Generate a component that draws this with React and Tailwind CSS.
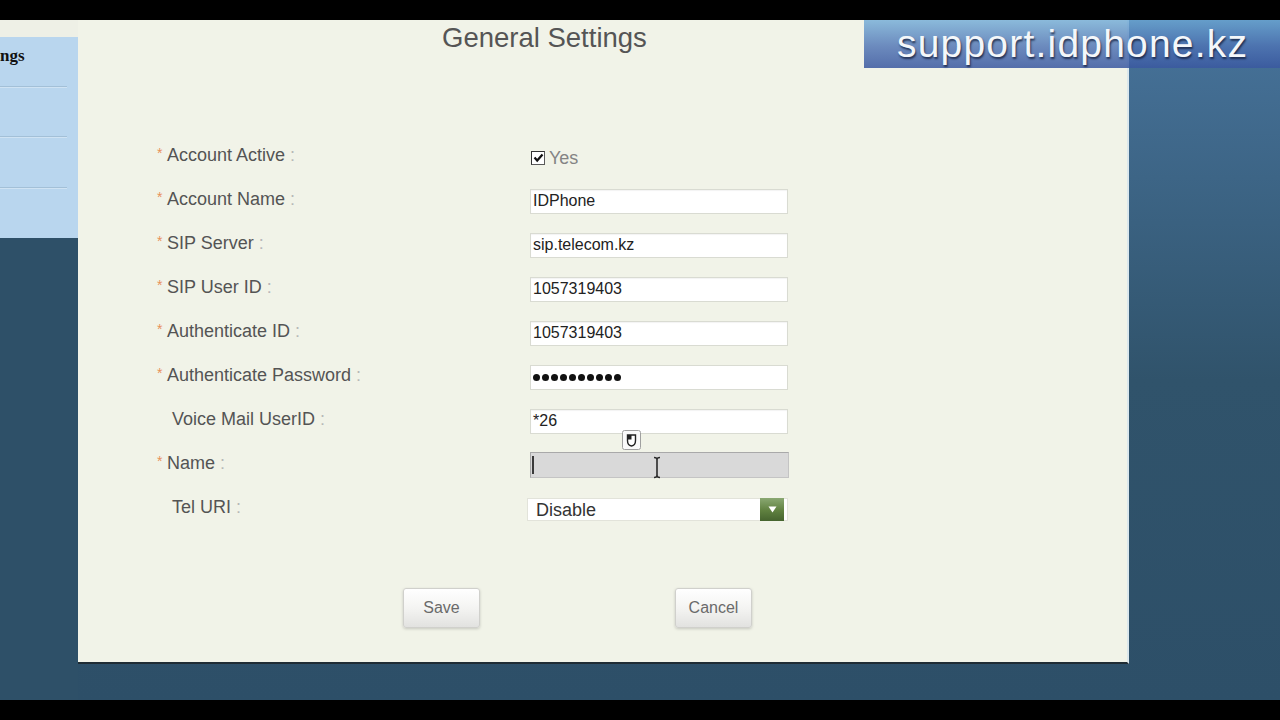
import React from 'react';

const rows = [
  { label: 'Account Active', req: true, kind: 'check' },
  { label: 'Account Name', req: true, kind: 'text', value: 'IDPhone' },
  { label: 'SIP Server', req: true, kind: 'text', value: 'sip.telecom.kz' },
  { label: 'SIP User ID', req: true, kind: 'text', value: '1057319403' },
  { label: 'Authenticate ID', req: true, kind: 'text', value: '1057319403' },
  { label: 'Authenticate Password', req: true, kind: 'password' },
  { label: 'Voice Mail UserID', req: false, kind: 'text', value: '*26' },
  { label: 'Name', req: true, kind: 'name' },
  { label: 'Tel URI', req: false, kind: 'select' },
];

function Label({ label, req }) {
  return (
    <div className="w-[375px] flex items-center text-[18px] leading-[22px] text-[#545454]">
      {req ? (
        <span className="w-[12px] pl-[2px] text-[14px] text-[#e8915a] relative top-[-2px]">*</span>
      ) : (
        <span className="w-[17px]" />
      )}
      <span>{label}</span>
      <span className="text-[#b8b8b8] ml-[5px]">:</span>
    </div>
  );
}

function Field({ row }) {
  if (row.kind === 'check') {
    return (
      <div className="flex items-center mt-[6px] ml-[1px]">
        <div className="w-[14px] h-[14px] bg-white border border-[#5a5a5a] border-t-[#333] border-l-[#333] flex items-center justify-center">
          <svg width="11" height="10" viewBox="0 0 11 10">
            <path d="M1.5 4.5 L4.2 7.5 L9.5 1.5" stroke="#111" strokeWidth="2.2" fill="none" />
          </svg>
        </div>
        <span className="ml-[4px] text-[18px] leading-[22px] text-[#848484]">Yes</span>
      </div>
    );
  }
  if (row.kind === 'text') {
    return (
      <div className="mt-[4px] w-[258px] h-[25px] bg-white border border-[#d9dbd2] shadow-[inset_0_1px_1px_rgba(0,0,0,0.05)] flex items-center pl-[2px] text-[16px] text-[#222]">
        {row.value}
      </div>
    );
  }
  if (row.kind === 'password') {
    return (
      <div className="mt-[4px] w-[258px] h-[25px] bg-white border border-[#d9dbd2] flex items-center pl-[2px] gap-[2px]">
        {Array.from({ length: 10 }).map((_, i) => (
          <div key={i} className="w-[7px] h-[7px] rounded-full bg-[#111]" />
        ))}
      </div>
    );
  }
  if (row.kind === 'name') {
    return (
      <div className="mt-[4px] w-[259px] h-[26px] bg-[#d9d9d9] border border-[#a9a9a9] border-b-[#c4c4c4] border-r-[#c4c4c4] flex items-center pl-[1px]">
        <div className="w-[2px] h-[18px] bg-[#3a3a3a]" />
      </div>
    );
  }
  return (
    <div className="mt-[5px] ml-[-3px] w-[261px] h-[23px] bg-white border border-[#e2e3da] flex items-center justify-between">
      <span className="pl-[8px] text-[18px] leading-[22px] text-[#333]">Disable</span>
      <div className="mr-[3px] w-[24px] h-[23px] bg-[linear-gradient(180deg,#8aa872_0%,#5f803f_55%,#46642f_100%)] flex items-center justify-center">
        <svg width="9" height="7" viewBox="0 0 9 7">
          <path d="M0.5 0.5 H8.5 L4.5 6.5 Z" fill="#ffffff" />
        </svg>
      </div>
    </div>
  );
}

function Btn({ children }) {
  return (
    <div className="w-[77px] h-[40px] rounded-[3px] border border-[#d0d0cc] bg-[linear-gradient(180deg,#ffffff_0%,#f4f4f2_50%,#e2e2e0_100%)] shadow-[0_1px_3px_rgba(0,0,0,0.18)] flex items-center justify-center text-[16px] text-[#6a6a6a]">
      {children}
    </div>
  );
}

export default function App() {
  return (
    <div className="w-[1280px] h-[720px] bg-black flex flex-col font-['Liberation_Sans',Arial,sans-serif] overflow-hidden">
      <div className="h-[20px] bg-black" />
      <div className="relative h-[680px] flex items-start bg-[linear-gradient(180deg,#47739b_0%,#30536b_53%,#2d4f68_100%)]">
        {/* left column */}
        <div className="w-[78px] h-full flex flex-col">
          <div className="h-[17px] bg-[#eef0e6]" />
          <div className="h-[201px] bg-[#b9d6ee] overflow-hidden flex flex-col">
            <div className="h-[51px] flex flex-col justify-between">
              <div className="pt-[8px] whitespace-nowrap ml-[-33px] font-['Liberation_Serif',serif] font-bold text-[17px] leading-[22px] text-[#111]">
                Settings
              </div>
              <div className="w-[67px] h-[2px] bg-[#a3c0d7] border-b border-[#cfe3f3]" />
            </div>
            <div className="h-[50px] flex flex-col justify-end">
              <div className="w-[67px] h-[2px] bg-[#a3c0d7] border-b border-[#cfe3f3]" />
            </div>
            <div className="h-[51px] flex flex-col justify-end">
              <div className="w-[67px] h-[2px] bg-[#a3c0d7] border-b border-[#cfe3f3]" />
            </div>
          </div>
          <div className="flex-1 bg-[#2e5068]" />
        </div>

        {/* main panel */}
        <div className="relative w-[1051px] h-[644px] bg-[#f1f3e8] border-r-2 border-r-[#dbe7ec] border-b-2 border-b-[#1f2c34] flex flex-col">
          <div className="pt-[2px] pl-[364px] text-[27.5px] leading-[32px] text-[#555]">General Settings</div>

          <div className="mt-[79px] pl-[77px] flex flex-col">
            {rows.map((r) => (
              <div key={r.label} className="h-[44px] flex items-center">
                <Label label={r.label} req={r.req} />
                <Field row={r} />
              </div>
            ))}
          </div>

          <div className="mt-[59px] pl-[325px] flex gap-[195px]">
            <Btn>Save</Btn>
            <Btn>Cancel</Btn>
          </div>

          {/* mouse tooltip icon */}
          <div className="absolute left-[544px] top-[410px]">
            <svg width="19" height="20" viewBox="0 0 19 20">
              <rect x="0.5" y="0.5" width="18" height="19" rx="2" fill="#fafafa" stroke="#a0a0a0" />
              <path d="M5.5 5 H13.5 V10.5 Q13.5 15.5 9.5 16 Q5.5 15.5 5.5 10.5 Z" fill="#ffffff" stroke="#222" strokeWidth="1.4" />
              <path d="M5.5 5 H9.5 V9.5 H5.5 Z" fill="#222" />
            </svg>
          </div>

          {/* text cursor */}
          <div className="absolute left-[574px] top-[436px]">
            <svg width="10" height="23" viewBox="0 0 10 23">
              <path d="M2 1.5 Q5 1.5 5 3.5 Q5 1.5 8 1.5 M5 3.5 V19.5 M2 21.5 Q5 21.5 5 19.5 Q5 21.5 8 21.5" stroke="#2a2a2a" strokeWidth="1.6" fill="none" />
            </svg>
          </div>
        </div>

        <div className="flex-1" />

        {/* watermark */}
        <div className="absolute right-0 top-0 w-[416px] h-[48px] bg-[linear-gradient(180deg,rgba(110,170,215,0.78)_0%,rgba(78,115,180,0.82)_55%,rgba(58,88,160,0.86)_100%)] pl-[33px] text-[39px] leading-[48px] tracking-[1.2px] text-[#f4f7fa] [text-shadow:1px_2px_2px_rgba(20,30,60,0.8)] whitespace-nowrap">
          support.idphone.kz
        </div>
      </div>
      <div className="h-[20px] bg-black" />
    </div>
  );
}
